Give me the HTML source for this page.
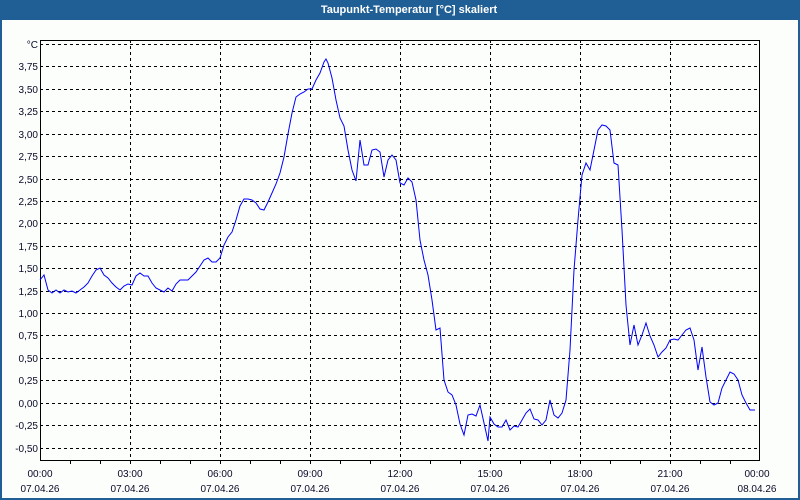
<!DOCTYPE html>
<html><head><meta charset="utf-8"><style>
html,body{margin:0;padding:0;width:800px;height:500px;overflow:hidden;background:#1f5f96}
</style></head><body>
<svg width="800" height="500" xmlns="http://www.w3.org/2000/svg" font-family="Liberation Sans, sans-serif" font-size="10">
<rect x="0" y="0" width="800" height="500" fill="#1f5f96"/>
<rect x="2" y="20" width="796" height="478" fill="#fcfefc"/>
<text x="409" y="13" fill="#fff" font-weight="bold" font-size="11" text-anchor="middle">Taupunkt-Temperatur [°C] skaliert</text>
<g stroke="#000" stroke-width="1" stroke-dasharray="3,3" shape-rendering="crispEdges">
<line x1="40" y1="44.5" x2="760" y2="44.5"/><line x1="40" y1="66.5" x2="760" y2="66.5"/><line x1="40" y1="89.5" x2="760" y2="89.5"/><line x1="40" y1="111.5" x2="760" y2="111.5"/><line x1="40" y1="134.5" x2="760" y2="134.5"/><line x1="40" y1="156.5" x2="760" y2="156.5"/><line x1="40" y1="179.5" x2="760" y2="179.5"/><line x1="40" y1="201.5" x2="760" y2="201.5"/><line x1="40" y1="223.5" x2="760" y2="223.5"/><line x1="40" y1="246.5" x2="760" y2="246.5"/><line x1="40" y1="268.5" x2="760" y2="268.5"/><line x1="40" y1="291.5" x2="760" y2="291.5"/><line x1="40" y1="313.5" x2="760" y2="313.5"/><line x1="40" y1="335.5" x2="760" y2="335.5"/><line x1="40" y1="358.5" x2="760" y2="358.5"/><line x1="40" y1="380.5" x2="760" y2="380.5"/><line x1="40" y1="403.5" x2="760" y2="403.5"/><line x1="40" y1="425.5" x2="760" y2="425.5"/><line x1="40" y1="448.5" x2="760" y2="448.5"/>
<line x1="130.5" y1="40" x2="130.5" y2="460"/><line x1="220.5" y1="40" x2="220.5" y2="460"/><line x1="310.5" y1="40" x2="310.5" y2="460"/><line x1="400.5" y1="40" x2="400.5" y2="460"/><line x1="490.5" y1="40" x2="490.5" y2="460"/><line x1="580.5" y1="40" x2="580.5" y2="460"/><line x1="670.5" y1="40" x2="670.5" y2="460"/>
</g>
<rect x="40.5" y="40.5" width="719" height="420" fill="none" stroke="#000" shape-rendering="crispEdges"/>
<g stroke="#000" shape-rendering="crispEdges">
<line x1="70.5" y1="460" x2="70.5" y2="464"/><line x1="100.5" y1="460" x2="100.5" y2="464"/><line x1="130.5" y1="460" x2="130.5" y2="464"/><line x1="160.5" y1="460" x2="160.5" y2="464"/><line x1="190.5" y1="460" x2="190.5" y2="464"/><line x1="220.5" y1="460" x2="220.5" y2="464"/><line x1="250.5" y1="460" x2="250.5" y2="464"/><line x1="280.5" y1="460" x2="280.5" y2="464"/><line x1="310.5" y1="460" x2="310.5" y2="464"/><line x1="340.5" y1="460" x2="340.5" y2="464"/><line x1="370.5" y1="460" x2="370.5" y2="464"/><line x1="400.5" y1="460" x2="400.5" y2="464"/><line x1="430.5" y1="460" x2="430.5" y2="464"/><line x1="460.5" y1="460" x2="460.5" y2="464"/><line x1="490.5" y1="460" x2="490.5" y2="464"/><line x1="520.5" y1="460" x2="520.5" y2="464"/><line x1="550.5" y1="460" x2="550.5" y2="464"/><line x1="580.5" y1="460" x2="580.5" y2="464"/><line x1="610.5" y1="460" x2="610.5" y2="464"/><line x1="640.5" y1="460" x2="640.5" y2="464"/><line x1="670.5" y1="460" x2="670.5" y2="464"/><line x1="700.5" y1="460" x2="700.5" y2="464"/><line x1="730.5" y1="460" x2="730.5" y2="464"/>
</g>
<g fill="#0a0a28" text-anchor="end">
<text x="38" y="48">°C</text><text x="38" y="70">3,75</text><text x="38" y="93">3,50</text><text x="38" y="115">3,25</text><text x="38" y="138">3,00</text><text x="38" y="160">2,75</text><text x="38" y="183">2,50</text><text x="38" y="205">2,25</text><text x="38" y="227">2,00</text><text x="38" y="250">1,75</text><text x="38" y="272">1,50</text><text x="38" y="295">1,25</text><text x="38" y="317">1,00</text><text x="38" y="339">0,75</text><text x="38" y="362">0,50</text><text x="38" y="384">0,25</text><text x="38" y="407">0,00</text><text x="38" y="429">-0,25</text><text x="38" y="452">-0,50</text>
</g>
<g fill="#0a0a28" text-anchor="middle">
<text x="40" y="477">00:00</text><text x="40" y="492">07.04.26</text>
<text x="130" y="477">03:00</text><text x="130" y="492">07.04.26</text>
<text x="220" y="477">06:00</text><text x="220" y="492">07.04.26</text>
<text x="310" y="477">09:00</text><text x="310" y="492">07.04.26</text>
<text x="400" y="477">12:00</text><text x="400" y="492">07.04.26</text>
<text x="490" y="477">15:00</text><text x="490" y="492">07.04.26</text>
<text x="580" y="477">18:00</text><text x="580" y="492">07.04.26</text>
<text x="670" y="477">21:00</text><text x="670" y="492">07.04.26</text>
<text x="757" y="477">00:00</text><text x="757" y="492">08.04.26</text>
</g>
<polyline fill="none" stroke="#0000ff" stroke-width="1" points="40,280 44,275 48,290 52,293 56,290 60,293 64,290 68,292 72,291 76,293 80,290 84,287 88,283 92,276 96,270 100,268 104,275 108,278 112,283 116,287 120,290 124,286 128,284 132,285 136,276 140,273 144,276 148,276 152,283 156,288 160,290 164,292 168,288 172,291 176,284 180,280 184,280 188,280 192,276 196,272 200,266 204,260 208,258 212,262 216,262 220,258 224,245 228,237 232,232 236,220 240,206 244,199 248,199 252,200 256,203 260,209 264,210 268,202 272,193 276,184 280,173 284,157 288,134 292,113 296,97 300,94 304,92 308,89 312,89 316,80 320,73 324,62 326,59 328,63 332,78 336,100 340,118 344,126 348,150 352,170 356,181 360,140 364,165 368,165 372,150 376,149 380,152 384,177 388,160 392,155 396,160 400,183 404,185 408,178 412,182 416,200 420,240 424,260 428,275 432,300 436,330 440,328 444,380 448,392 452,395 456,405 460,424 464,435 468,415 472,414 476,416 480,405 484,423 488,441 490,417 494,424 498,427 502,427 506,420 510,430 514,426 518,427 522,420 526,413 530,409 534,419 538,420 542,425 546,420 550,400 554,415 558,418 562,413 566,400 570,350 574,270 578,220 582,175 586,163 590,170 594,150 598,130 602,125 606,126 610,130 614,163 618,165 622,230 626,305 630,345 634,325 638,345 642,335 646,323 650,336 654,345 658,357 662,352 666,348 670,340 674,339 678,340 682,335 686,330 690,328 694,340 698,370 702,347 706,377 710,402 714,405 718,403 722,388 726,380 730,372 734,374 738,380 742,395 746,403 750,410 755,410"/>
</svg>
</body></html>
